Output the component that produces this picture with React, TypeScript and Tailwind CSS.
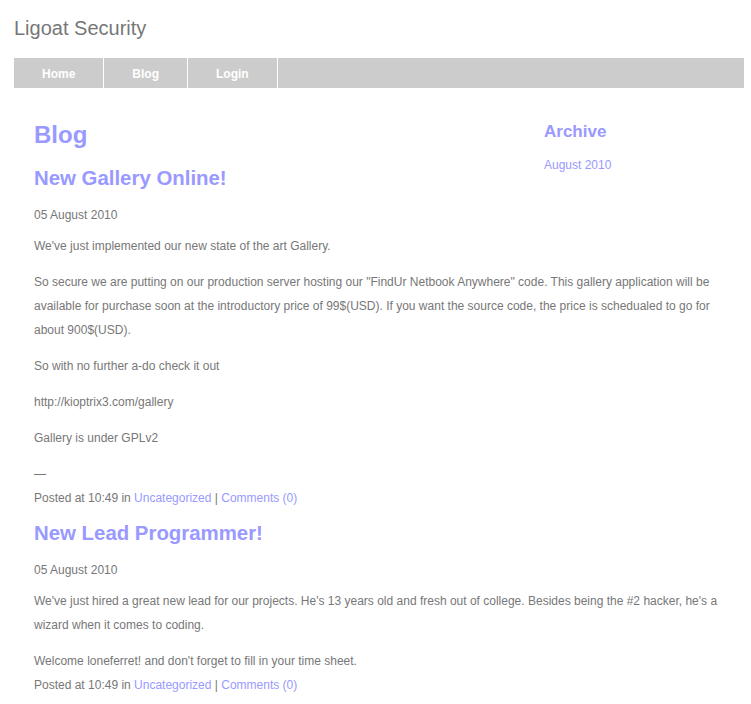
import React from "react";

const Link = ({ children }: { children: React.ReactNode }) => (
  <a href="#" className="text-[#9999ff]">
    {children}
  </a>
);

const Posted = () => (
  <>
    Posted at 10:49 in <Link>Uncategorized</Link> | <Link>Comments (0)</Link>
  </>
);

const navItems = ["Home", "Blog", "Login"];

export default function App() {
  return (
    <div
      className="min-h-[704px] bg-white text-[#777777]"
      style={{ fontFamily: '"Liberation Sans", Arial, sans-serif' }}
    >
      <div className="ml-[14px] w-[730px] pt-[16px]">
        <div className="text-[20px] leading-[24px]">Ligoat Security</div>

        <nav className="mt-[18px] flex h-[30px] bg-[#cccccc]">
          {navItems.map((item) => (
            <a
              key={item}
              href="#"
              className="flex items-center border-r border-white px-[28px] pt-[2px] text-[12px] font-bold text-white"
            >
              {item}
            </a>
          ))}
        </nav>

        <div className="px-[20px] pt-[33px] text-[12px]">
          <aside className="float-right mt-[1px] w-[180px]">
            <h3 className="text-[17px] font-bold leading-[20px] text-[#9999ff]">Archive</h3>
            <div className="mt-[15px] leading-[16px]">
              <Link>August 2010</Link>
            </div>
          </aside>

          <h1 className="text-[24px] font-bold leading-[28px] text-[#9999ff]">Blog</h1>

          <h2 className="mt-[17px] text-[20.4px] font-bold leading-[24px] text-[#9999ff]">
            New Gallery Online!
          </h2>
          <div className="mt-[13px] leading-[24px]">05 August 2010</div>
          <div className="mt-[7px] space-y-[12px] leading-[24px]">
            <p>We've just implemented our new state of the art Gallery.</p>
            <p>
              So secure we are putting on our production server hosting our "FindUr Netbook Anywhere"
              code. This gallery application will be available for purchase soon at the introductory
              price of 99$(USD). If you want the source code, the price is schedualed to go for about
              900$(USD).
            </p>
            <p>So with no further a-do check it out</p>
            <p>http://kioptrix3.com/gallery</p>
            <p>Gallery is under GPLv2</p>
          </div>
          <div className="mt-[12px] leading-[24px]">
            —
            <br />
            <Posted />
          </div>

          <h2 className="mt-[11px] text-[20.4px] font-bold leading-[24px] text-[#9999ff]">
            New Lead Programmer!
          </h2>
          <div className="mt-[13px] leading-[24px]">05 August 2010</div>
          <div className="mt-[7px] space-y-[12px] leading-[24px]">
            <p>
              We've just hired a great new lead for our projects. He's 13 years old and fresh out of
              college. Besides being the #2 hacker, he's a wizard when it comes to coding.
            </p>
            <p>Welcome loneferret! and don't forget to fill in your time sheet.</p>
          </div>
          <div className="leading-[24px]">
            <Posted />
          </div>
        </div>
      </div>
    </div>
  );
}
